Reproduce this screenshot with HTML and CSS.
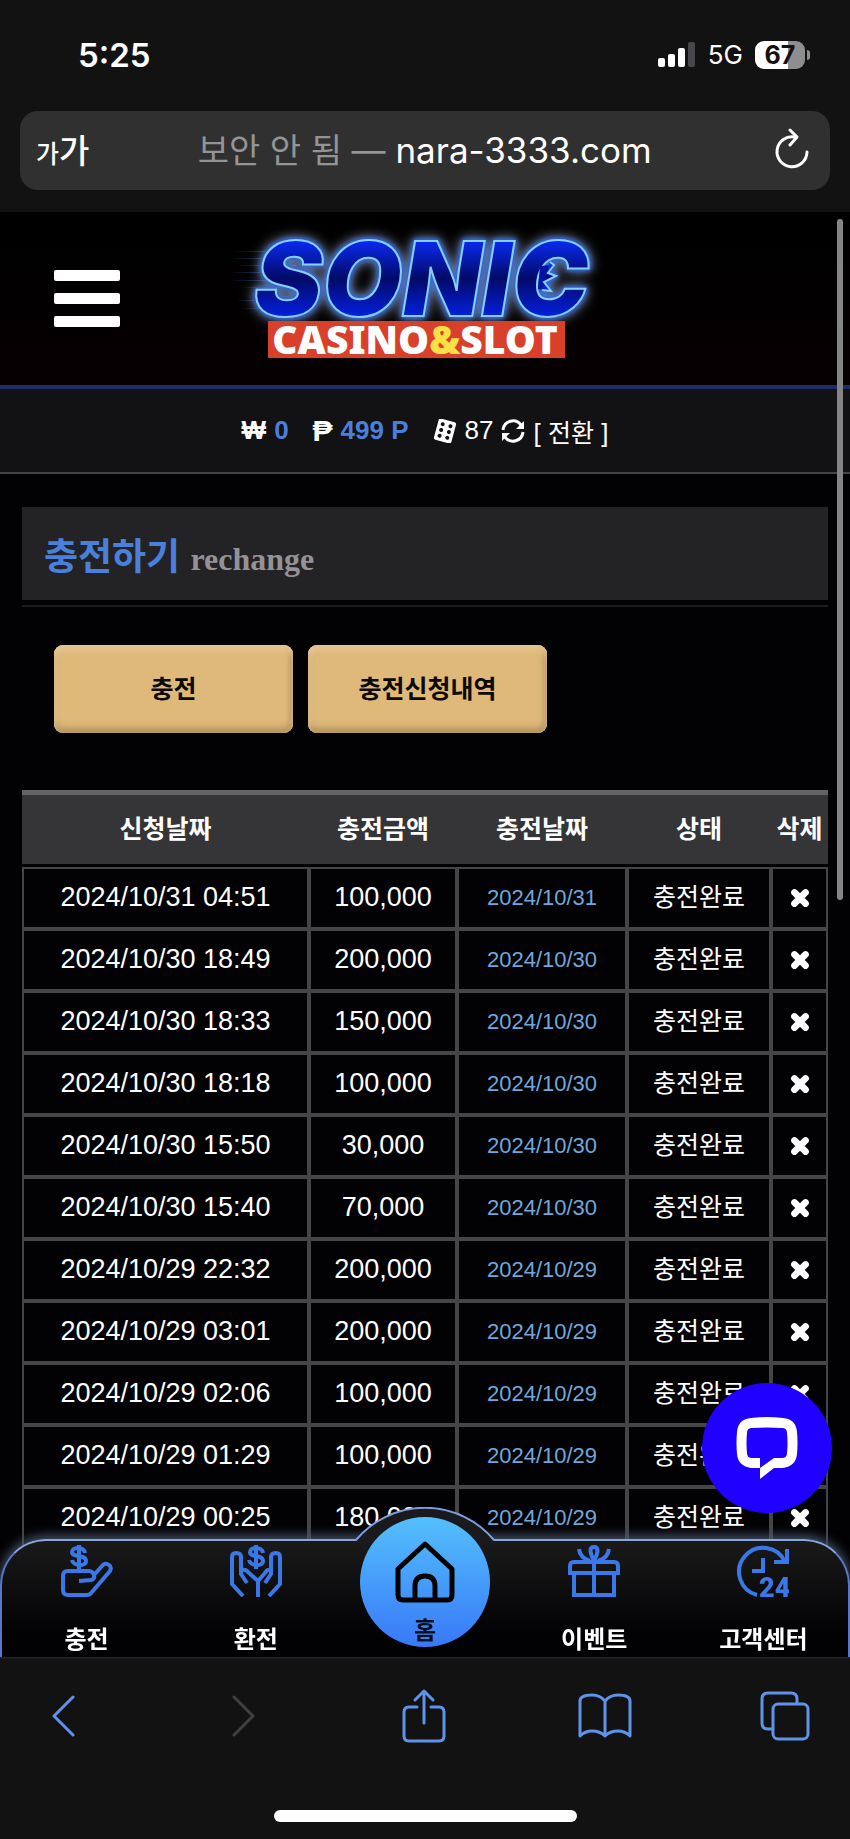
FILE: index.html
```
<!DOCTYPE html>
<html lang="ko">
    <head>
        <meta charset="utf-8">
        <meta name="viewport" content="width=device-width">
        <title>충전하기</title>
        <link rel="stylesheet" href="styles.css">
    </head>
    <body>
        <svg class="sprite" width="0" height="0">
            <symbol id="x" viewBox="0 0 18 18"><path d="M4 4 L14 14 M14 4 L4 14" stroke="#fff" stroke-width="6" stroke-linecap="round"/></symbol>
        </svg>
        <div class="browserTop">
            <div class="statusBar">
                <span class="time">5:25</span>
                <div class="statusIcons">
                    <svg width="38" height="26" viewBox="0 0 38 26" fill="#fff">
                        <rect x="0" y="16" width="7" height="9" rx="2"/>
                        <rect x="10" y="12" width="7" height="13" rx="2"/>
                        <rect x="20" y="6" width="7" height="19" rx="2"/>
                        <rect x="30" y="0" width="7" height="25" rx="2" fill="#48484a"/>
                    </svg>
                    <span class="network">5G</span>
                    <div class="batteryWrap">
                        <span class="battery">67</span>
                        <span class="batteryTip"></span>
                    </div>
                </div>
            </div>
            <div class="addressBar">
                <button type="button" class="textSize"><small>가</small>가</button>
                <div class="address"><span class="notSecure">보안 안 됨 —</span> nara-3333.com</div>
                <button type="button" class="reload" aria-label="reload">
                    <svg width="36" height="42" viewBox="0 0 36 42" fill="none" stroke="#fff" stroke-width="3" stroke-linecap="round" stroke-linejoin="round">
                        <path d="M21 9 A15 15 0 1 0 33 24"/>
                        <path d="M16 2 L23 9 L16 17"/>
                    </svg>
                </button>
            </div>
        </div>
        <header class="siteHeader">
            <button type="button" class="menuButton" aria-label="menu"><span></span><span></span><span></span></button>
            <svg class="logo" width="400" height="160" viewBox="0 0 400 160">
                <defs>
                    <linearGradient id="sonicBlue" x1="0" y1="0" x2="0" y2="1">
                        <stop offset="0.2" stop-color="#0a2af0"/>
                        <stop offset="0.5" stop-color="#020a68"/>
                        <stop offset="0.8" stop-color="#0420dc"/>
                    </linearGradient>
                    <linearGradient id="speed">
                        <stop offset="0" stop-color="#3c5cb0" stop-opacity="0"/>
                        <stop offset="1" stop-color="#3c5cb0"/>
                    </linearGradient>
                </defs>
                <g fill="url(#speed)">
                    <rect x="14" y="32" width="60" height="1"/>
                    <rect x="10" y="39" width="60" height="1"/>
                    <rect x="16" y="46" width="60" height="1"/>
                    <rect x="10" y="53" width="60" height="1"/>
                    <rect x="10" y="61" width="60" height="1"/>
                    <rect x="20" y="68" width="50" height="1"/>
                    <rect x="16" y="81" width="40" height="1"/>
                    <rect x="22" y="89" width="40" height="1"/>
                </g>
                <g class="sonic">
                    <text x="34" y="97">SONIC</text>
                    <path d="M320 47 L334 46 L328 54 L336 57 L324 63 L331 72 L318 70 Z" fill="#0414a0" stroke="none"/>
                    <path d="M330 43 L334 46 L328 54 L336 57 L324 63 L331 72 L322 71"/>
                </g>
                <rect x="48" y="102" width="297" height="37" fill="#d9402b"/>
                <text class="casino" x="195" y="135" text-anchor="middle">CASINO<tspan fill="#fde047">&amp;</tspan>SLOT</text>
            </svg>
        </header>
        <div class="wallet">
            <span class="coin">₩</span>
            <b class="money">0</b>
            <span class="coin point">₱</span>
            <b class="money">499 P</b>
            <svg class="dice" width="24" height="24" viewBox="0 0 24 24">
                <g transform="rotate(15 12 12)">
                    <rect x="3" y="1" width="18" height="22" rx="2" fill="#fff"/>
                    <g fill="#121113"><circle cx="8" cy="6" r="2"/><circle cx="8" cy="12" r="2"/><circle cx="8" cy="18" r="2"/><circle cx="16" cy="6" r="2"/><circle cx="16" cy="12" r="2"/><circle cx="16" cy="18" r="2"/></g>
                </g>
            </svg>
            <span>87</span>
            <svg width="24" height="24" viewBox="0 0 24 24" fill="none" stroke="#fff" stroke-width="3">
                <path d="M2 11 A10 10 0 0 1 20 6"/>
                <path d="M22 13 A10 10 0 0 1 4 18"/>
                <path d="M23 2 V10 H15 Z M1 22 V14 H9 Z" fill="#fff" stroke="none"/>
            </svg>
            <a href="#" class="convert">[ <span>전환</span> ]</a>
        </div>
        <main>
            <h1 class="pageTitle">충전하기 <small>rechange</small></h1>
            <div class="tabs">
                <button type="button">충전</button>
                <button type="button">충전신청내역</button>
            </div>
            <table class="history">
                <colgroup><col><col class="colAmount"><col class="colDate"><col class="colState"><col class="colDelete"></colgroup>
                <thead>
                    <tr><th>신청날짜</th><th>충전금액</th><th>충전날짜</th><th>상태</th><th>삭제</th></tr>
                </thead>
                <tbody>
                    <tr><td>2024/10/31 04:51</td><td>100,000</td><td class="done">2024/10/31</td><td class="state">충전완료</td><td><button type="button" aria-label="삭제"><svg width="20" height="20"><use href="#x"/></svg></button></td></tr>
                    <tr><td>2024/10/30 18:49</td><td>200,000</td><td class="done">2024/10/30</td><td class="state">충전완료</td><td><button type="button" aria-label="삭제"><svg width="20" height="20"><use href="#x"/></svg></button></td></tr>
                    <tr><td>2024/10/30 18:33</td><td>150,000</td><td class="done">2024/10/30</td><td class="state">충전완료</td><td><button type="button" aria-label="삭제"><svg width="20" height="20"><use href="#x"/></svg></button></td></tr>
                    <tr><td>2024/10/30 18:18</td><td>100,000</td><td class="done">2024/10/30</td><td class="state">충전완료</td><td><button type="button" aria-label="삭제"><svg width="20" height="20"><use href="#x"/></svg></button></td></tr>
                    <tr><td>2024/10/30 15:50</td><td>30,000</td><td class="done">2024/10/30</td><td class="state">충전완료</td><td><button type="button" aria-label="삭제"><svg width="20" height="20"><use href="#x"/></svg></button></td></tr>
                    <tr><td>2024/10/30 15:40</td><td>70,000</td><td class="done">2024/10/30</td><td class="state">충전완료</td><td><button type="button" aria-label="삭제"><svg width="20" height="20"><use href="#x"/></svg></button></td></tr>
                    <tr><td>2024/10/29 22:32</td><td>200,000</td><td class="done">2024/10/29</td><td class="state">충전완료</td><td><button type="button" aria-label="삭제"><svg width="20" height="20"><use href="#x"/></svg></button></td></tr>
                    <tr><td>2024/10/29 03:01</td><td>200,000</td><td class="done">2024/10/29</td><td class="state">충전완료</td><td><button type="button" aria-label="삭제"><svg width="20" height="20"><use href="#x"/></svg></button></td></tr>
                    <tr><td>2024/10/29 02:06</td><td>100,000</td><td class="done">2024/10/29</td><td class="state">충전완료</td><td><button type="button" aria-label="삭제"><svg width="20" height="20"><use href="#x"/></svg></button></td></tr>
                    <tr><td>2024/10/29 01:29</td><td>100,000</td><td class="done">2024/10/29</td><td class="state">충전완료</td><td><button type="button" aria-label="삭제"><svg width="20" height="20"><use href="#x"/></svg></button></td></tr>
                    <tr><td>2024/10/29 00:25</td><td>180,000</td><td class="done">2024/10/29</td><td class="state">충전완료</td><td><button type="button" aria-label="삭제"><svg width="20" height="20"><use href="#x"/></svg></button></td></tr>
                </tbody>
            </table>
        </main>
        <div class="scrollThumb"></div>
        <button type="button" class="chat" aria-label="chat">
            <svg width="62" height="62" viewBox="0 0 62 62">
                <path fill="#fff" fill-rule="evenodd" d="M15 1 Q31 -1 47 1 Q60 2 61 15 Q62 26 61 37 Q60 49 47 51 L38 51 L24 62 V51 L15 51 Q2 49 1 37 Q0 26 1 15 Q2 2 15 1 Z M16 11 Q11 11 11 16 Q10 26 11 36 Q11 41 16 41 L24 41 V51 L38 41 L46 41 Q51 41 51 36 Q52 26 51 16 Q51 11 46 11 Q31 10 16 11 Z"/>
            </svg>
        </button>
        <div class="bottom">
            <nav class="siteNav">
                <svg class="bump" width="142" height="36" viewBox="0 0 142 36">
                    <path d="M1 33 L2 33 A90 90 0 0 1 140 33 L141 33 L141 36 L1 36 Z" fill="#1a1a1c"/>
                    <path d="M1 33 L2 33 A90 90 0 0 1 140 33 L141 33" fill="none" stroke="#7d9de0" stroke-width="2"/>
                </svg>
                <a href="#">
                    <svg width="52" height="52" viewBox="0 0 52 52" fill="none" stroke="#3b78e7" stroke-width="4" stroke-linejoin="round">
                        <path d="M24 8 C23 1 11 2 11 7 C11 13 25 9 25 16 C25 22 12 21 11 15 M18 0 V26"/>
                        <path d="M18 36 L30 35 Q34 34 33 30 Q32 26 27 26 H7 Q2 26 2 31 V45 Q2 50 7 50 H26 Q29 50 31 47 L49 26 Q51 22 48 20 Q44 17 41 21 L32 31"/>
                    </svg>
                    <span>충전</span>
                </a>
                <a href="#">
                    <svg width="52" height="52" viewBox="0 0 52 52" fill="none" stroke="#3b78e7" stroke-width="4">
                        <path d="M33 8 C32 1 20 2 20 7 C20 13 33 9 33 16 C33 22 20 21 19 15 M26 0 V24"/>
                        <path d="M13 51 L2 39 V12 Q2 8 6 8 Q11 8 11 12 V29 L17 38 M39 51 L50 39 V12 Q50 8 46 8 Q41 8 41 12 V29 L35 38 M12 25 Q16 24 19 28 L28 36 L35 28 Q37 24 41 25 M28 52 V34"/>
                    </svg>
                    <span>환전</span>
                </a>
                <a href="#" class="home">
                    <svg width="62" height="62" viewBox="0 0 62 62" fill="none" stroke="#000" stroke-width="5" stroke-linejoin="round">
                        <path d="M31 3 L58 28 V54 Q58 59 53 59 H9 Q4 59 4 54 V28 Z"/>
                        <path d="M21 59 V45 Q21 35 31 35 Q41 35 41 45 V59"/>
                    </svg>
                    <span>홈</span>
                </a>
                <a href="#">
                    <svg width="52" height="52" viewBox="0 0 52 52" fill="none" stroke="#3b78e7" stroke-width="4">
                        <rect x="6" y="28" width="40" height="22"/>
                        <path d="M2 28 V21 Q2 17 6 17 H46 Q50 17 50 21 V28 Z M26 16 V50"/>
                        <path d="M26 16 Q19 2 26 2 Q33 2 26 16 M22 16 Q12 13 11 4 M30 16 Q40 13 41 4"/>
                    </svg>
                    <span>이벤트</span>
                </a>
                <a href="#">
                    <svg width="52" height="52" viewBox="0 0 52 52" fill="none" stroke="#3b78e7" stroke-width="4">
                        <path d="M20 50 A24 24 0 1 1 48 17"/>
                        <path d="M50 4 V17 H37 M26 13 V26 H15"/>
                        <text class="clockText" x="22" y="52">24</text>
                    </svg>
                    <span>고객센터</span>
                </a>
            </nav>
            <div class="toolbar">
                <button type="button" aria-label="back"><svg width="24" height="42" viewBox="0 0 24 42"><path d="M22 2 L3 21 L22 40"/></svg></button>
                <button type="button" aria-label="forward" disabled><svg width="24" height="42" viewBox="0 0 24 42"><path d="M2 2 L21 21 L2 40"/></svg></button>
                <button type="button" aria-label="share"><svg width="44" height="54" viewBox="0 0 44 54"><path d="M15 18 H7 Q2 18 2 23 V47 Q2 52 7 52 H37 Q42 52 42 47 V23 Q42 18 37 18 H29 M22 34 V2 M13 11 L22 2 L31 11"/></svg></button>
                <button type="button" aria-label="bookmarks"><svg width="54" height="46" viewBox="0 0 54 46"><path d="M27 8 Q22 2 14 2 Q2 2 2 8 V43 Q7 38 14 38 Q22 38 27 43 Q32 38 40 38 Q47 38 52 43 V8 Q52 2 40 2 Q32 2 27 8 V43"/></svg></button>
                <button type="button" aria-label="tabs"><svg width="50" height="50" viewBox="0 0 50 50"><path d="M12 38 H8 Q2 38 2 32 V8 Q2 2 8 2 H31 Q37 2 37 8 V12"/><rect x="13" y="13" width="35" height="35" rx="5"/></svg></button>
            </div>
            <div class="homeIndicator"></div>
        </div>
    </body>
</html>
```
FILE: styles.css
```
* {
    box-sizing: border-box;
}
body {
    margin: 0;
    min-height: 100vh;
    background: #020103;
    color: #fff;
    font-family: "Liberation Sans", "Noto Sans CJK KR", sans-serif;
    font-size: 26px;
}
button {
    padding: 0;
    border: 0;
    background: none;
    color: inherit;
    font-family: inherit;
}
svg {
    display: block;
}
a {
    color: inherit;
    text-decoration: none;
}
.sprite {
    position: absolute;
}

/* browser chrome */
.browserTop {
    height: 212px;
    padding: 0 20px;
    background: #121213;
    font-family: Inter, "Noto Sans CJK KR", sans-serif;
}
.statusBar {
    display: flex;
    align-items: center;
    justify-content: space-between;
    height: 111px;
    padding: 0 20px 2px 58px;
}
.time {
    font-size: 33px;
    font-weight: 600;
}
.statusIcons {
    display: flex;
    align-items: center;
    gap: 12px;
}
.network {
    font-size: 26px;
}
.batteryWrap {
    display: flex;
    align-items: center;
    gap: 2px;
}
.battery {
    width: 50px;
    border-radius: 9px;
    background: linear-gradient(90deg, #fff 67%, #8e8e90 67%);
    color: #121213;
    font-size: 25px;
    font-weight: 700;
    line-height: 28px;
    text-align: center;
}
.batteryTip {
    width: 3px;
    height: 10px;
    border-radius: 0 3px 3px 0;
    background: #8e8e90;
}
.addressBar {
    display: flex;
    align-items: center;
    justify-content: space-between;
    height: 79px;
    padding: 0 20px 4px 16px;
    border-radius: 18px;
    background: #303031;
}
.textSize {
    font-size: 33px;
    font-weight: 500;
}
.textSize small {
    font-size: 25px;
}
.address {
    padding-right: 14px;
    font-size: 35px;
}
.notSecure {
    color: #949496;
    font-size: 34px;
}

/* site header */
.siteHeader {
    display: grid;
    grid-template-columns: 220px 1fr;
    align-items: center;
    height: 177px;
    border-bottom: 4px solid #202c68;
    background: linear-gradient(#000, #060002);
}
.menuButton {
    display: flex;
    flex-direction: column;
    gap: 12px;
    width: 66px;
    margin-left: 54px;
}
.menuButton span {
    height: 11px;
    border-radius: 2px;
    background: #fff;
}
.logo {
    overflow: visible;
}
.sonic {
    fill: url(#sonicBlue);
    stroke: #86d0ff;
    stroke-width: 2px;
    font-family: Inter, sans-serif;
    font-size: 103px;
    font-style: italic;
    font-weight: 900;
    filter: drop-shadow(0 0 2px #2c64dc) drop-shadow(0 0 2px #2c64dc) drop-shadow(0 0 6px #8090b0);
}
.casino {
    fill: #fff;
    font-family: "Noto Sans", sans-serif;
    font-size: 39px;
    font-weight: 900;
}
.wallet {
    display: flex;
    align-items: center;
    justify-content: center;
    gap: 8px;
    height: 85px;
    border-bottom: 2px solid #444346;
    background: #121113;
}
.coin {
    font-weight: 700;
}
.point {
    margin-left: 16px;
    font-size: 30px;
}
.money {
    color: #4a80dc;
}
.dice {
    margin-left: 16px;
}
.convert span {
    font-size: 25px;
}

/* page content */
main {
    padding: 33px 22px 0;
}
.pageTitle {
    position: relative;
    height: 93px;
    margin: 0;
    padding-left: 22px;
    background: #232224;
    color: #4a80dc;
    font-size: 37px;
    line-height: 102px;
}
.pageTitle::after {
    content: "";
    position: absolute;
    left: 0;
    right: 0;
    bottom: -7px;
    height: 2px;
    background: #1c1b1d;
}
.pageTitle small {
    color: #949296;
    font-family: "Liberation Serif", serif;
    font-size: 32px;
}
.tabs {
    display: flex;
    gap: 15px;
    margin: 45px 32px 57px;
}
.tabs button {
    width: 239px;
    height: 88px;
    padding-bottom: 4px;
    border-radius: 9px;
    background: #deb979;
    box-shadow: inset 0 5px 6px #e6c796, inset 0 -5px 7px #b4935f, inset -3px 0 5px #b4935f, inset 3px 0 4px #e6c796;
    color: #0c0805;
    font-size: 25px;
    font-weight: 700;
}
.history {
    width: 100%;
    table-layout: fixed;
    border-collapse: separate;
    border-spacing: 0;
    text-align: center;
}
.colAmount {
    width: 148px;
}
.colDate {
    width: 170px;
}
.colState {
    width: 144px;
}
.colDelete {
    width: 57px;
}
.history th {
    height: 77px;
    padding: 0 0 6px;
    border-top: 5px solid #636264;
    border-bottom: 3px solid #020103;
    background: #353436;
    font-size: 25px;
    white-space: nowrap;
}
.history td {
    height: 62px;
    padding: 0 0 2px;
    border: 2px solid #454446;
    font-size: 27px;
}
.history .done {
    padding: 0;
    color: #6ea8dc;
    font-size: 22px;
}
.history .state {
    padding-bottom: 6px;
    font-size: 25px;
}
.history td button {
    display: inline-block;
    vertical-align: middle;
}
.scrollThumb {
    position: absolute;
    top: 219px;
    right: 7px;
    width: 6px;
    height: 681px;
    border-radius: 3px;
    background: #858486;
}

/* fixed bottom bars */
.chat {
    position: fixed;
    right: 18px;
    bottom: 326px;
    z-index: 1;
    display: flex;
    align-items: center;
    justify-content: center;
    width: 130px;
    height: 130px;
    border-radius: 50%;
    background: #2000ff;
}
.bottom {
    position: fixed;
    left: 0;
    right: 0;
    bottom: 0;
    z-index: 2;
    background: linear-gradient(transparent 118px, #2c2c2e 118px, #121213 120px);
}
.siteNav {
    position: relative;
    display: grid;
    grid-template-columns: repeat(5, 1fr);
    height: 118px;
    border: 2px solid #5877c4;
    border-top-color: #8aa4dc;
    border-bottom: 0;
    border-radius: 46px 46px 0 0;
    background: linear-gradient(#1b1a1b, #020103 80%);
    box-shadow: 0 -3px 12px #4a5870;
    clip-path: inset(-60px 0 0 0);
}
.siteNav a {
    display: flex;
    flex-direction: column;
    align-items: center;
    justify-content: space-between;
    padding: 4px 0 0;
    font-size: 24px;
    font-weight: 700;
    line-height: 34px;
}
.bump {
    position: absolute;
    top: -34px;
    left: 50%;
    margin-left: -71px;
}
.siteNav .home {
    position: relative;
    z-index: 1;
    justify-content: flex-start;
    gap: 14px;
    justify-self: center;
    width: 130px;
    height: 130px;
    margin-top: -24px;
    padding-top: 24px;
    border-radius: 50%;
    background: linear-gradient(#54c0fc, #3878f8);
    color: #06101c;
    line-height: 28px;
}
.clockText {
    fill: #3b78e7;
    stroke: none;
    font-family: Roboto, sans-serif;
    font-size: 27px;
    font-weight: 900;
}
.toolbar {
    display: flex;
    align-items: center;
    justify-content: space-between;
    height: 118px;
    padding: 0 40px 0 38px;
}
.toolbar button {
    display: flex;
    justify-content: center;
    width: 50px;
}
.toolbar svg {
    flex-shrink: 0;
}
.toolbar path, .toolbar rect {
    fill: none;
    stroke: #5f93ea;
    stroke-width: 3px;
    stroke-linecap: round;
    stroke-linejoin: round;
}
.toolbar button:disabled path {
    stroke: #404042;
}
.homeIndicator {
    width: 303px;
    height: 12px;
    margin: 35px auto 17px;
    border-radius: 6px;
    background: #fff;
}
```
